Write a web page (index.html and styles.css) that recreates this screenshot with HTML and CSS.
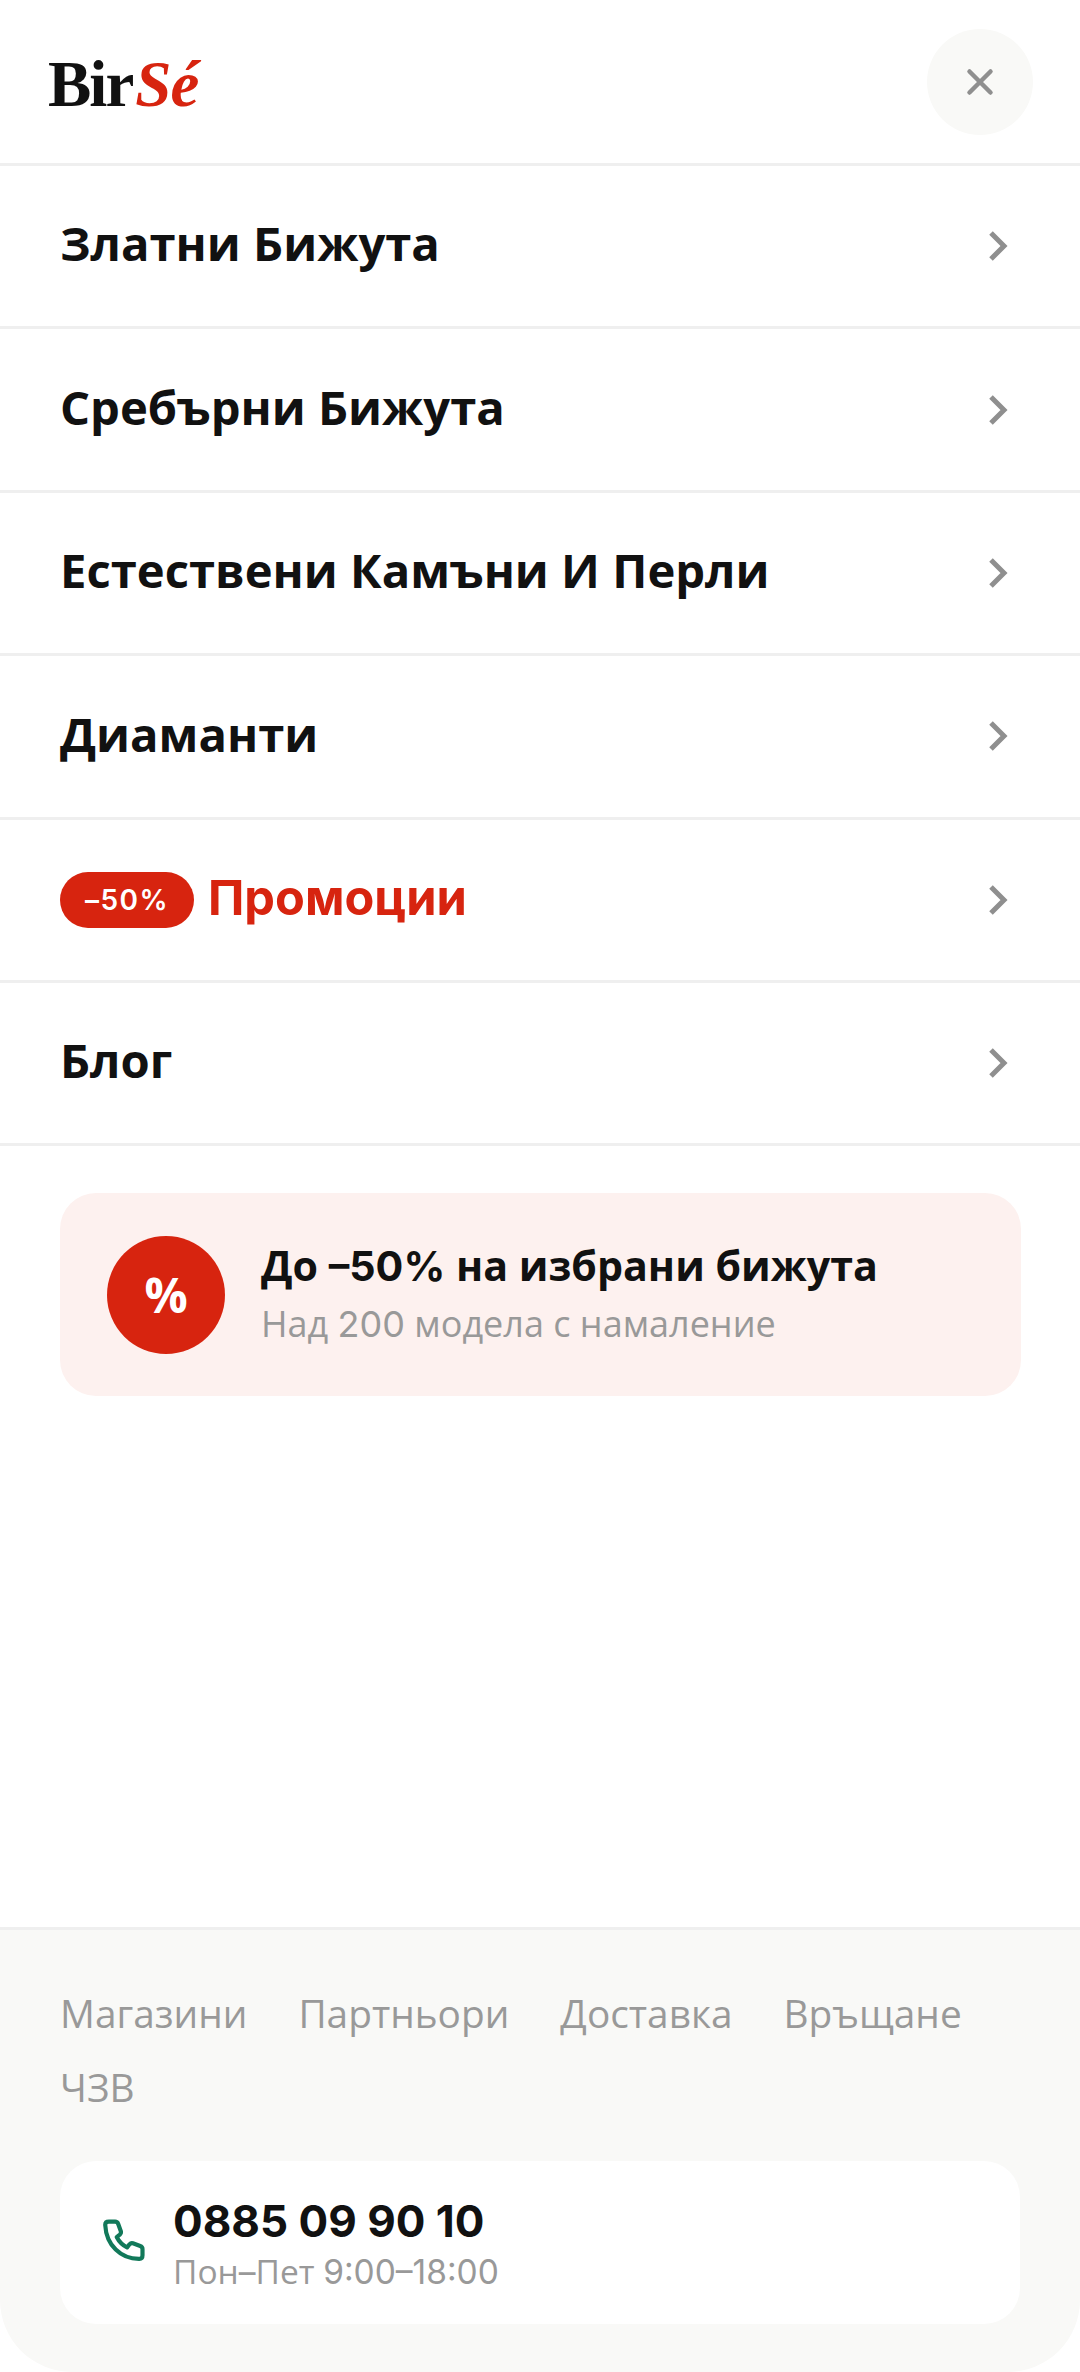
FILE: index.html
```html
<!DOCTYPE html>
<html lang="bg">
<head>
<meta charset="utf-8">
<title>BirSé</title>
<link rel="stylesheet" href="styles.css">
</head>
<body>
<div class="screen">
  <header class="top">
    <div class="logo"><span class="logo-a">Bir</span><span class="logo-b">Sé</span></div>
    <button class="close" aria-label="Затвори">
      <svg width="30" height="30" viewBox="0 0 30 30" fill="none" stroke="#8f8f8f" stroke-width="4.5" stroke-linecap="round"><path d="M4.500 4.500l21 21M25.500 4.500l-21 21"/></svg>
    </button>
  </header>
  <nav class="menu">
    <a class="row"><span class="label">Златни Бижута</span><svg class="chev" width="20" height="30" viewBox="0 0 20 30" fill="none" stroke="#8f8f8f" stroke-width="5"><path d="M3 2l13 13L3 28"/></svg></a>
    <a class="row"><span class="label">Сребърни Бижута</span><svg class="chev" width="20" height="30" viewBox="0 0 20 30" fill="none" stroke="#8f8f8f" stroke-width="5"><path d="M3 2l13 13L3 28"/></svg></a>
    <a class="row"><span class="label">Естествени Камъни И Перли</span><svg class="chev" width="20" height="30" viewBox="0 0 20 30" fill="none" stroke="#8f8f8f" stroke-width="5"><path d="M3 2l13 13L3 28"/></svg></a>
    <a class="row"><span class="label">Диаманти</span><svg class="chev" width="20" height="30" viewBox="0 0 20 30" fill="none" stroke="#8f8f8f" stroke-width="5"><path d="M3 2l13 13L3 28"/></svg></a>
    <a class="row"><span class="promo"><span class="badge">–50%</span><span class="label label-red">Промоции</span></span><svg class="chev" width="20" height="30" viewBox="0 0 20 30" fill="none" stroke="#8f8f8f" stroke-width="5"><path d="M3 2l13 13L3 28"/></svg></a>
    <a class="row"><span class="label">Блог</span><svg class="chev" width="20" height="30" viewBox="0 0 20 30" fill="none" stroke="#8f8f8f" stroke-width="5"><path d="M3 2l13 13L3 28"/></svg></a>
  </nav>
  <section class="banner">
    <div class="pct">%</div>
    <div class="banner-text">
      <div class="banner-title">До <span class="num">–50%</span> на избрани бижута</div>
      <div class="banner-sub">Над <span class="num">200</span> модела с намаление</div>
    </div>
  </section>
  <footer class="foot">
    <div class="links"><a>Магазини</a><a>Партньори</a><a>Доставка</a><a>Връщане</a><a>ЧЗВ</a></div>
    <div class="contact">
      <svg class="phone" width="50" height="50" viewBox="0 0 48 48" fill="none" stroke="#12795a" stroke-width="4" stroke-linejoin="round"><path d="M5 6.500c0-2 1.500-3 3.500-3h6c1.500 0 2.500.8 3 2.200l2.500 7c.4 1.300 0 2.400-1 3.300l-3 2.300c2.300 4.500 5.500 7.700 10 10l2.300-3c.9-1 2-1.400 3.300-1l7 2.500c1.400.5 2.200 1.500 2.200 3v6c0 2-1 3.500-3 3.500C20 39.500 6 26 5 6.500z"/></svg>
      <div class="contact-text">
        <div class="tel">0885 09 90 10</div>
        <div class="hours">Пон<span class="num">–</span>Пет <span class="num">9:00–18:00</span></div>
      </div>
    </div>
  </footer>
</div>
</body>
</html>
```
FILE: styles.css
```css
* { box-sizing: border-box; }
html, body { margin: 0; padding: 0; background: #fff; }
.screen { width: 1080px; height: 2372px; display: flex; flex-direction: column; font-family: "Open Sans", sans-serif; color: #111; overflow: hidden; }
.top { height: 166px; flex: none; display: flex; align-items: center; justify-content: space-between; padding: 0 47px 0 48px; border-bottom: 3px solid #efefef; }
.logo { font-family: "Liberation Serif", serif; font-size: 65px; font-weight: 700; line-height: 1; display: flex; padding-top: 6px; }
.logo-a { color: #111; letter-spacing: -2px; }
.logo-b { color: #d7240f; font-style: italic; font-weight: 700; letter-spacing: -1px; margin-left: 3px; }
.close { width: 106px; height: 106px; border-radius: 50%; border: 0; padding: 0; background: #f9f9f7; display: flex; align-items: center; justify-content: center; }
.menu { display: flex; flex-direction: column; flex: none; }
.row { height: 163.400px; display: flex; align-items: center; justify-content: space-between; padding: 0 72px 0 60px; border-bottom: 3px solid #efefef; }
.label { font-size: 47.200px; font-weight: 700; line-height: 1.2; padding-bottom: 5px; }
.label-red { color: #d7240f; font-family: Inter, sans-serif; font-weight: 700; font-size: 48.700px; padding-bottom: 3px; }
.promo { display: flex; align-items: center; gap: 14px; }
.badge { width: 134px; height: 56px; border-radius: 28px; background: #d7240f; color: #fff; font-family: Inter, sans-serif; font-weight: 600; font-size: 28px; letter-spacing: 1.500px; display: flex; align-items: center; justify-content: center; }
.banner { flex: none; height: 203px; margin: 47px 59px 0 60px; padding: 0 47px; background: #fdf1ef; border-radius: 36px; display: flex; align-items: center; gap: 36px; }
.pct { width: 118px; height: 118px; border-radius: 50%; background: #d7240f; color: #fff; font-weight: 700; font-size: 48px; display: flex; align-items: center; justify-content: center; flex: none; }
.num { font-family: Inter, sans-serif; }
.banner-title { font-size: 41.200px; font-weight: 700; line-height: 57px; }
.banner-sub { font-size: 36px; color: #999; line-height: 57px; }
.foot { margin-top: auto; height: 445px; flex: none; background: #f9f9f7; border-top: 3px solid #efefef; border-radius: 0 0 72px 72px; padding: 46px 60px 0; }
.links { display: flex; flex-wrap: wrap; column-gap: 51px; font-size: 38.800px; color: #999; line-height: 74px; }
.contact { height: 163px; margin-top: 37px; background: #fff; border-radius: 36px; display: flex; align-items: center; gap: 23px; padding: 0 0 0 40px; }
.phone { flex: none; }
.contact-text { padding-top: 3px; }
.tel { font-family: Inter, sans-serif; font-weight: 700; font-size: 44px; line-height: 54px; }
.hours { font-size: 33.500px; color: #999; line-height: 46px; }
```
